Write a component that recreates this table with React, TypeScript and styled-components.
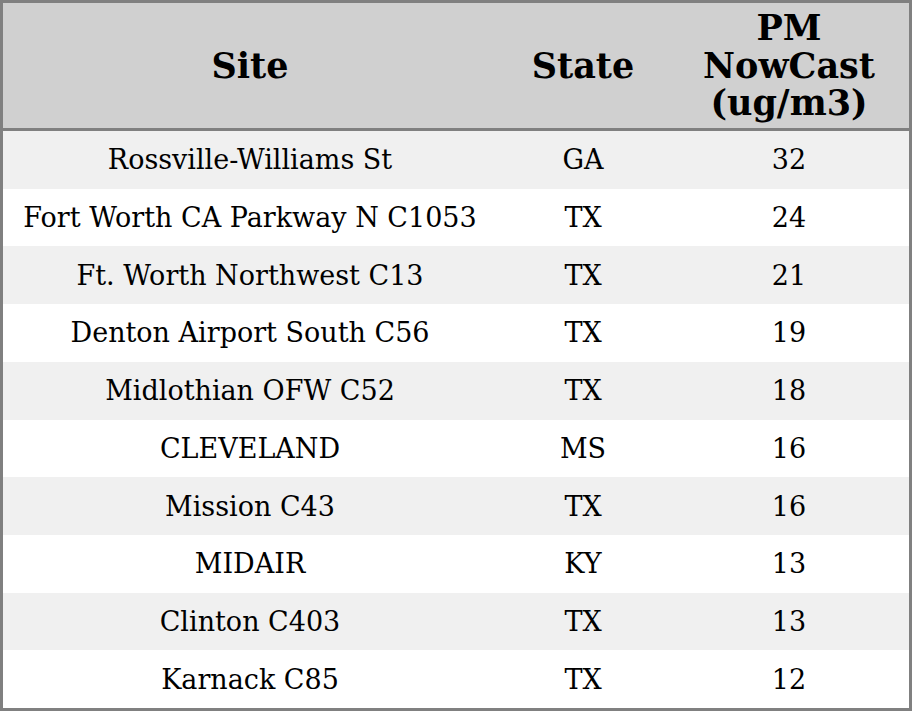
import React from "react";
import styled, { createGlobalStyle } from "styled-components";

const GlobalStyle = createGlobalStyle`
  html, body {
    margin: 0;
    padding: 0;
    background: #ffffff;
  }
`;

const Table = styled.div`
  box-sizing: border-box;
  width: 912px;
  height: 711px;
  border: 3px solid #808080;
  display: flex;
  flex-direction: column;
  font-family: "DejaVu Serif", "Liberation Serif", serif;
  color: #000000;
`;

const columns = "494px 172px 240px";

const HeaderRow = styled.div`
  display: grid;
  grid-template-columns: ${columns};
  height: 125px;
  flex: none;
  background: #d0d0d0;
  border-bottom: 3px solid #808080;
`;

const HeaderCell = styled.div`
  display: flex;
  align-items: center;
  justify-content: center;
  text-align: center;
  font-size: 35px;
  font-weight: bold;
  line-height: 37.5px;
`;

const Row = styled.div<{ $striped: boolean }>`
  display: grid;
  grid-template-columns: ${columns};
  flex: 1;
  background: ${(p) => (p.$striped ? "#f0f0f0" : "#ffffff")};
`;

const Cell = styled.div`
  display: flex;
  align-items: center;
  justify-content: center;
  font-size: 27px;
  white-space: nowrap;
`;

type Reading = {
  site: string;
  state: string;
  value: number;
};

const readings: Reading[] = [
  { site: "Rossville-Williams St", state: "GA", value: 32 },
  { site: "Fort Worth CA Parkway N C1053", state: "TX", value: 24 },
  { site: "Ft. Worth Northwest C13", state: "TX", value: 21 },
  { site: "Denton Airport South C56", state: "TX", value: 19 },
  { site: "Midlothian OFW C52", state: "TX", value: 18 },
  { site: "CLEVELAND", state: "MS", value: 16 },
  { site: "Mission C43", state: "TX", value: 16 },
  { site: "MIDAIR", state: "KY", value: 13 },
  { site: "Clinton C403", state: "TX", value: 13 },
  { site: "Karnack C85", state: "TX", value: 12 },
];

const App = () => (
  <>
    <GlobalStyle />
    <Table>
      <HeaderRow>
        <HeaderCell>Site</HeaderCell>
        <HeaderCell>State</HeaderCell>
        <HeaderCell>
          PM
          <br />
          NowCast
          <br />
          (ug/m3)
        </HeaderCell>
      </HeaderRow>
      {readings.map((r, i) => (
        <Row key={r.site} $striped={i % 2 === 0}>
          <Cell>{r.site}</Cell>
          <Cell>{r.state}</Cell>
          <Cell>{r.value}</Cell>
        </Row>
      ))}
    </Table>
  </>
);

export default App;
